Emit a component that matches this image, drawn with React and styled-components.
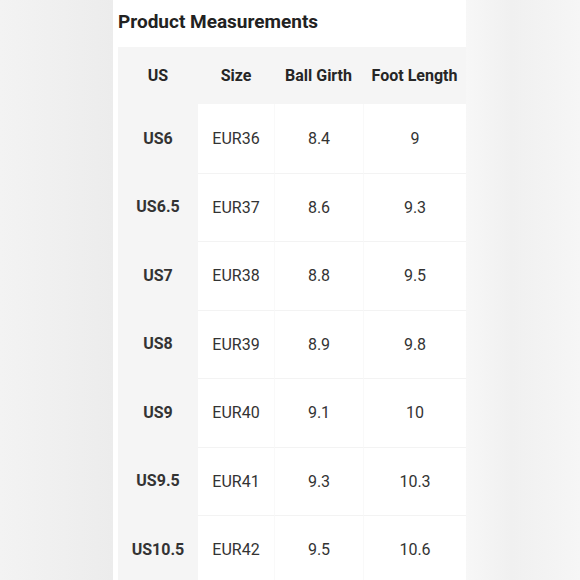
import styled, { createGlobalStyle } from 'styled-components';

const GlobalStyle = createGlobalStyle`
  html, body {
    margin: 0;
    padding: 0;
    background: #f2f2f2;
  }
  body {
    font-family: Roboto, "Noto Sans", sans-serif;
  }
`;

const Screen = styled.div`
  width: 580px;
  height: 580px;
  overflow: hidden;
  display: flex;
`;

const Side = styled.div`
  width: ${p => p.w}px;
  flex-shrink: 0;
  background: ${p => p.bg};
`;

const Panel = styled.div`
  width: 353px;
  flex-shrink: 0;
  background: #ffffff;
  display: flex;
  flex-direction: column;
  padding-left: 5px;
  box-sizing: border-box;
`;

const Title = styled.h2`
  margin: 0;
  flex-shrink: 0;
  height: 47px;
  line-height: 43px;
  font-size: 19px;
  font-weight: 700;
  color: #222;
`;

const Table = styled.div`
  flex-shrink: 0;
  display: grid;
  grid-template-columns: 80px 76px 89px 103px;
  grid-template-rows: 57px repeat(7, 68.5px);
`;

const Head = styled.div`
  background: #f5f5f5;
  display: flex;
  align-items: center;
  justify-content: center;
  font-size: 16px;
  font-weight: 700;
  color: #262626;
`;

const Cell = styled.div`
  display: flex;
  align-items: center;
  justify-content: center;
  font-size: 16px;
  color: #333;
  background: ${p => (p.first ? '#f5f5f5' : '#ffffff')};
  font-weight: ${p => (p.first ? 700 : 400)};
  border-top: ${p => (p.top && !p.first ? '1px solid #f3f3f3' : 'none')};
  border-left: ${p => (p.left ? '1px solid #f9f9f9' : 'none')};
  box-sizing: border-box;
`;

const rows = [
  ['US6', 'EUR36', '8.4', '9'],
  ['US6.5', 'EUR37', '8.6', '9.3'],
  ['US7', 'EUR38', '8.8', '9.5'],
  ['US8', 'EUR39', '8.9', '9.8'],
  ['US9', 'EUR40', '9.1', '10'],
  ['US9.5', 'EUR41', '9.3', '10.3'],
  ['US10.5', 'EUR42', '9.5', '10.6'],
];

export default function App() {
  return (
    <>
      <GlobalStyle />
      <Screen>
        <Side w={113} bg="linear-gradient(90deg, #f3f3f3, #ececec)" />
        <Panel>
          <Title>Product Measurements</Title>
          <Table>
            {['US', 'Size', 'Ball Girth', 'Foot Length'].map(h => (
              <Head key={h}>{h}</Head>
            ))}
            {rows.map((r, i) =>
              r.map((v, j) => (
                <Cell key={i + '-' + j} first={j === 0} top={i > 0} left={j > 1}>
                  {v}
                </Cell>
              ))
            )}
          </Table>
        </Panel>
        <Side w={114} bg="linear-gradient(90deg, #f7f7f7, #f0f0f0 40%, #f6f6f6)" />
      </Screen>
    </>
  );
}
